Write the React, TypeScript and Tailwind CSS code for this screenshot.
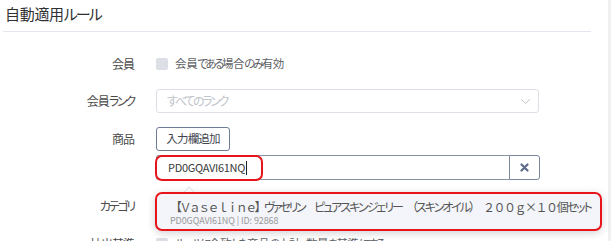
import React from "react";

const font = "font-['Noto_Sans_CJK_JP','Noto_Sans',sans-serif]";

function Label({ children }: { children: React.ReactNode }) {
  return (
    <div className="w-[131px] shrink-0 h-[24px] flex items-center justify-end text-[12px] tracking-[-1px] text-[#4a4a4a]">
      {children}
    </div>
  );
}

function K({ children, t = "tracking-[-2.2px]" }: { children: React.ReactNode; t?: string }) {
  return <span className={t}>{children}</span>;
}

export default function App() {
  return (
    <div className={`w-[611px] h-[241px] overflow-hidden flex bg-white ${font} [font-feature-settings:'palt']`}>
      <div className="flex-1 pl-[3px] pr-[17px] flex flex-col">
        <div className="h-[32px] shrink-0 border-b border-[#e3e6ee] flex items-center pl-[2px] pb-[2px] text-[15px] tracking-[-0.3px] text-[#303133]">
          自動適用<span className="tracking-[-2px]">ルール</span>
        </div>

        {/* 会員 */}
        <div className="flex mt-[20px] shrink-0">
          <Label>会員</Label>
          <div className="ml-[22px] h-[24px] flex items-center gap-[7px]">
            <span className="w-[12px] h-[12px] rounded-[2px] bg-[#dcdfe6]" />
            <span className="text-[11.5px] tracking-[-0.3px] text-[#606266]">
              会員<K t="tracking-[-2.5px]">である</K>場合<K t="tracking-[-2.5px]">のみ</K>有効
            </span>
          </div>
        </div>

        {/* 会員ランク */}
        <div className="flex mt-[13px] shrink-0">
          <Label>
            会員<K>ランク</K>
          </Label>
          <div className="ml-[22px] w-[383px] h-[24px] border border-[#dcdfe6] rounded-[3px] flex items-center justify-between pl-[10px] pr-[7px]">
            <span className="text-[12px] tracking-[-2.3px] text-[#c0c4cc]">すべてのランク</span>
            <svg width="11" height="7" viewBox="0 0 11 7" fill="none">
              <path d="M1 1.2 L5.5 5.5 L10 1.2" stroke="#c0c4cc" strokeWidth="1" />
            </svg>
          </div>
        </div>

        {/* 商品 */}
        <div className="flex mt-[14px] shrink-0">
          <Label>商品</Label>
          <div className="ml-[22px] flex flex-col">
            <button className="w-[74px] h-[24px] border border-[#6f7c97] rounded-[3px] text-[11.5px] tracking-[-0.8px] text-[#3f4650] flex items-center justify-center">
              入力欄追加
            </button>
            <div className="relative mt-[4px] flex w-[384px] h-[25px]">
              <div className="flex-1 border border-[#8a94a8] border-r-0 rounded-l-[3px] flex items-center pl-[11px] text-[11px] tracking-[-0.3px] text-[#3a3a3a]">
                PD0GQAVI61NQ
                <span className="w-px h-[14px] bg-[#222] ml-[1px]" />
              </div>
              <div className="w-[31px] border border-[#7a869c] rounded-r-[3px] flex items-center justify-center">
                <svg width="9" height="9" viewBox="0 0 9 9">
                  <path d="M1.5 1.5 L7.5 7.5 M7.5 1.5 L1.5 7.5" stroke="#5b6a88" strokeWidth="2.2" strokeLinecap="round" />
                </svg>
              </div>
              {/* annotation */}
              <div className="absolute left-[-1px] top-[0px] w-[108px] h-[26px] border-2 border-[#e8141a] rounded-[7px] pointer-events-none" />

              {/* suggestion popup */}
              <div className="absolute left-[-1px] top-[37px] w-[447px] h-[39px] z-10">
                <div className="absolute left-[30px] top-[-4px] w-[8px] h-[8px] rotate-45 bg-white border-l border-t border-[#e4e7ed]" />
                <div className="relative w-full h-full rounded-[7px] border-2 border-[#e8141a] bg-[#f4f5fa] shadow-[0_2px_8px_rgba(0,0,0,0.18)] pl-[13px] pt-[5px]">
                  <div className="text-[12px] leading-[15px] text-[#555] whitespace-nowrap">
                    <span className="[font-feature-settings:normal] tracking-[-2.6px]">【Ｖａｓｅｌｉｎｅ】</span>
                    <K t="tracking-[-2.5px]">ヴァセリン</K>
                    <K t="tracking-[-2px]">　ピュアスキンジェリー　（スキンオイル）　</K>
                    <span className="[font-feature-settings:normal] tracking-[-1.5px]">２００ｇ×１０</span>
                    <K t="tracking-[-2px]">個セット</K>
                  </div>
                  <div className="text-[9px] leading-[11px] mt-[1px] tracking-[-0.1px] text-[#999] whitespace-nowrap">
                    PD0GQAVI61NQ | ID: 92868
                  </div>
                </div>
              </div>
            </div>
          </div>
        </div>

        {/* カテゴリ */}
        <div className="flex mt-[14px] shrink-0">
          <Label>
            <K>カテゴリ</K>
          </Label>
        </div>

        {/* 抽出基準 */}
        <div className="flex mt-[14px] shrink-0">
          <Label>抽出基準</Label>
          <div className="ml-[22px] h-[24px] flex items-center gap-[7px]">
            <span className="w-[12px] h-[12px] rounded-[2px] bg-[#dcdfe6]" />
            <span className="text-[11.5px] tracking-[-0.3px] text-[#606266]">
              <K t="tracking-[-2.5px]">ルールに</K>合致<K t="tracking-[-2.5px]">した</K>商品<K t="tracking-[-2.5px]">の</K>小計・数量<K t="tracking-[-2.5px]">を</K>基準<K t="tracking-[-2.5px]">にする</K>
            </span>
          </div>
        </div>
      </div>
      <div className="w-[3px] bg-[#f0f0f0] shrink-0" />
    </div>
  );
}
